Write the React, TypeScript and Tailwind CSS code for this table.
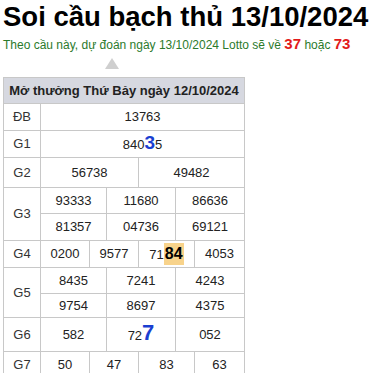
const Big = ({ children }: { children: React.ReactNode }) => (
  <b className="text-[19px] leading-[14px] text-[#1a3fd1]">{children}</b>
);

const Cell = ({ span, children, rowSpan, cls = "" }: { span: number; children?: React.ReactNode; rowSpan?: number; cls?: string }) => (
  <td colSpan={span} rowSpan={rowSpan} className={`border border-[#c8c8c8] text-center p-0 ${cls}`}>
    {children}
  </td>
);

const Label = ({ children, rowSpan }: { children: React.ReactNode; rowSpan?: number }) => (
  <td rowSpan={rowSpan} className="border border-[#c8c8c8] text-center p-0 text-[#333]">
    {children}
  </td>
);

export default function App() {
  return (
    <div className="w-[375px] h-[373px] overflow-hidden bg-white font-['Liberation_Sans',Arial,sans-serif] text-[#222]">
      <h1 className="pl-[3px] pt-[1px] text-[27.5px] font-bold leading-[32px] text-black">
        Soi cầu bạch thủ 13/10/2024
      </h1>
      <p className="pl-[3px] mt-[2px] text-[12px] leading-[18px] text-[#2b7a2b]">
        Theo cầu này, dự đoán ngày 13/10/2024 Lotto sẽ về{" "}
        <b className="text-[15px] text-[#e21b1b]">37</b> hoặc{" "}
        <b className="text-[15px] text-[#e21b1b]">73</b>
      </p>
      <div className="ml-[105px] mt-[4px] h-0 w-0 border-x-[7px] border-b-[11px] border-x-transparent border-b-[#cfcfcf]" />
      <table className="ml-[3px] mt-[8px] border-collapse text-[13px] leading-[16px]">
        <colgroup>
          <col className="w-[37px]" />
          <col className="w-[49px]" />
          <col className="w-[17px]" />
          <col className="w-[32px]" />
          <col className="w-[37px]" />
          <col className="w-[19px]" />
          <col className="w-[50px]" />
        </colgroup>
        <tbody>
          <tr className="h-[26px] bg-[#d6d8e0]">
            <td colSpan={7} className="border border-[#c8c8c8] text-center font-bold text-[#222] px-1">
              Mở thưởng Thứ Bảy ngày 12/10/2024
            </td>
          </tr>
          <tr className="h-[27px]">
            <Label>ĐB</Label>
            <Cell span={6}>13763</Cell>
          </tr>
          <tr className="h-[27px]">
            <Label>G1</Label>
            <Cell span={6}>840<Big>3</Big>5</Cell>
          </tr>
          <tr className="h-[30px]">
            <Label>G2</Label>
            <Cell span={3}>56738</Cell>
            <Cell span={3}>49482</Cell>
          </tr>
          <tr className="h-[26px]">
            <Label rowSpan={2}>G3</Label>
            <Cell span={2}>93333</Cell>
            <Cell span={2}>11680</Cell>
            <Cell span={2}>86636</Cell>
          </tr>
          <tr className="h-[27px]">
            <Cell span={2}>81357</Cell>
            <Cell span={2}>04736</Cell>
            <Cell span={2}>69121</Cell>
          </tr>
          <tr className="h-[27px]">
            <Label>G4</Label>
            <Cell span={1}>0200</Cell>
            <Cell span={2}>9577</Cell>
            <Cell span={2}>
              71<b className="inline-block bg-[#f8d38b] px-[1px] text-[16px] leading-[22px] text-black">84</b>
            </Cell>
            <Cell span={1}>4053</Cell>
          </tr>
          <tr className="h-[26px]">
            <Label rowSpan={2}>G5</Label>
            <Cell span={2}>8435</Cell>
            <Cell span={2}>7241</Cell>
            <Cell span={2}>4243</Cell>
          </tr>
          <tr className="h-[24px]">
            <Cell span={2}>9754</Cell>
            <Cell span={2}>8697</Cell>
            <Cell span={2}>4375</Cell>
          </tr>
          <tr className="h-[34px]">
            <Label>G6</Label>
            <Cell span={2}>582</Cell>
            <Cell span={2}>72<b className="text-[22px] text-[#1a3fd1]">7</b></Cell>
            <Cell span={2}>052</Cell>
          </tr>
          <tr className="h-[27px]">
            <Label>G7</Label>
            <Cell span={1}>50</Cell>
            <Cell span={2}>47</Cell>
            <Cell span={2}>83</Cell>
            <Cell span={1}>63</Cell>
          </tr>
        </tbody>
      </table>
    </div>
  );
}
